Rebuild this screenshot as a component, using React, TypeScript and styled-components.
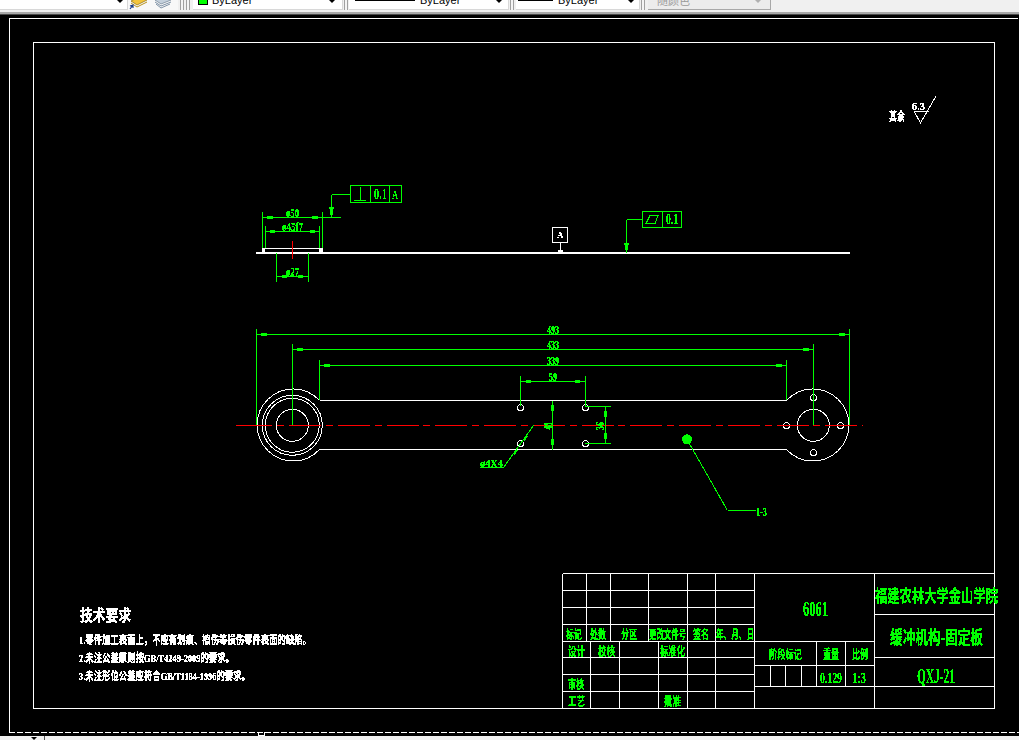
import React from "react";
import styled, { createGlobalStyle } from "styled-components";

const GlobalStyle = createGlobalStyle`
  html, body {
    margin: 0;
    padding: 0;
    background: #000000;
  }
`;

const Page = styled.div`
  display: flex;
  flex-direction: column;
  width: 1019px;
  height: 740px;
  overflow: hidden;
  font-family: "Liberation Sans", "Noto Sans CJK SC", sans-serif;
`;

const Toolbar = styled.div`
  display: flex;
  align-items: flex-end;
  flex: 0 0 15px;
  height: 15px;
  padding-bottom: 4px;
  box-sizing: border-box;
  overflow: hidden;
  background: #f0f0f0;
  border-bottom: 1px solid #4a4a4a;
  box-shadow: inset 0 -2px 0 #a8a8a8;
`;

const Combo = styled.div<{ $w: number; $ml?: number; $disabled?: boolean }>`
  position: relative;
  display: flex;
  align-items: center;
  flex: 0 0 auto;
  width: ${(p) => p.$w}px;
  height: 20px;
  margin-left: ${(p) => p.$ml ?? 0}px;
  box-sizing: border-box;
  background: ${(p) => (p.$disabled ? "#ececec" : "#ffffff")};
  border-bottom: 1px solid ${(p) => (p.$disabled ? "#a8a8a8" : "#d8d8d8")};
  border-right: 1px solid ${(p) => (p.$disabled ? "#a8a8a8" : "#d8d8d8")};
  color: ${(p) => (p.$disabled ? "#9a9a9a" : "#000000")};
  font-size: 11px;
`;

const ComboArrow = styled.span<{ $disabled?: boolean; $r: number }>`
  position: absolute;
  right: ${(p) => p.$r}px;
  top: 9px;
  width: 0;
  height: 0;
  border-left: 4px solid transparent;
  border-right: 4px solid transparent;
  border-top: 4px solid ${(p) => (p.$disabled ? "#b0b0b0" : "#000000")};
`;

const ColorSwatch = styled.span`
  width: 10px;
  height: 10px;
  margin: 0 4px 0 5px;
  background: #00ff00;
  border: 1px solid #000000;
  box-sizing: border-box;
`;

const LineSample = styled.span<{ $w: number; $ml: number }>`
  flex: 0 0 auto;
  width: ${(p) => p.$w}px;
  height: 2px;
  margin: 0 5px 0 ${(p) => p.$ml}px;
  background: #000000;
`;

const DisabledLabel = styled.span`
  margin-left: 9px;
`;

const Grip = styled.span<{ $ml: number }>`
  flex: 0 0 auto;
  width: 2px;
  height: 20px;
  margin-left: ${(p) => p.$ml}px;
  background: #f4f4f4;
  border-left: 1px solid #a0a0a0;
  border-right: 1px solid #a0a0a0;
`;

const IconSlot = styled.div`
  display: flex;
  align-items: flex-end;
  flex: 0 0 50px;
  height: 20px;
  background: #f8f8f8;
`;

const Viewport = styled.div`
  flex: 0 0 721px;
  height: 721px;
  background: #000000;
`;

const Sheet = styled.svg`
  display: block;
  width: 1019px;
  height: 721px;
`;

const StatusStrip = styled.div`
  position: relative;
  flex: 1;
  background: #f0f0f0;
`;

const StatusDivider = styled.span`
  position: absolute;
  left: 44px;
  top: 0;
  width: 1px;
  height: 4px;
  background: #555555;
`;

const StatusArrow = styled.span`
  position: absolute;
  left: 31px;
  top: 1px;
  width: 0;
  height: 0;
  border-left: 3px solid transparent;
  border-right: 3px solid transparent;
  border-top: 3px solid #000000;
`;

const CadText = styled.text<{ $size: number; $color?: string; $heavy?: number }>`
  font-family: "Liberation Serif", "Noto Sans CJK SC", serif;
  font-size: ${(p) => p.$size}px;
  font-weight: 700;
  fill: ${(p) => p.$color ?? "#00ff00"};
  stroke: ${(p) => p.$color ?? "#00ff00"};
  stroke-width: ${(p) => p.$heavy ?? 0.25}px;
`;

const GREEN = "#00ff00";
const WHITE = "#ffffff";
const RED = "#ff0000";

type Seg = [number, number, number, number];
// [x, right, baseline, size, text]
type Label = [number, number, number, number, string];

const TITLE_LINES: Seg[] = [
  [562.5, 573.5, 994.5, 573.5],
  [562.5, 590.5, 754.5, 590.5],
  [562.5, 607.5, 754.5, 607.5],
  [562.5, 624.5, 754.5, 624.5],
  [562.5, 641.5, 874.5, 641.5],
  [562.5, 657.5, 754.5, 657.5],
  [562.5, 674.5, 754.5, 674.5],
  [562.5, 691.5, 754.5, 691.5],
  [754.5, 665.5, 874.5, 665.5],
  [754.5, 686.5, 994.5, 686.5],
  [874.5, 614.5, 994.5, 614.5],
  [874.5, 657.5, 994.5, 657.5],
  [562.5, 573.5, 562.5, 708.5],
  [586.5, 573.5, 586.5, 641.5],
  [610.5, 573.5, 610.5, 641.5],
  [648.5, 573.5, 648.5, 641.5],
  [687.5, 573.5, 687.5, 708.5],
  [715.5, 573.5, 715.5, 708.5],
  [754.5, 573.5, 754.5, 708.5],
  [590.5, 641.5, 590.5, 708.5],
  [619.5, 641.5, 619.5, 708.5],
  [658.5, 641.5, 658.5, 708.5],
  [874.5, 573.5, 874.5, 708.5],
  [816.5, 641.5, 816.5, 686.5],
  [845.5, 641.5, 845.5, 686.5],
  [770.5, 665.5, 770.5, 686.5],
  [785.5, 665.5, 785.5, 686.5],
  [801.5, 665.5, 801.5, 686.5],
];

const DIM_LINES: Seg[] = [
  // upper view, diameters
  [262.5, 212, 262.5, 248],
  [322.5, 212, 322.5, 248],
  [262.5, 217.5, 341, 217.5],
  [265.5, 226, 265.5, 248],
  [319.5, 226, 319.5, 248],
  [265.5, 231.5, 319.5, 231.5],
  [276.5, 253, 276.5, 282],
  [308.5, 253, 308.5, 282],
  [276.5, 276.5, 308.5, 276.5],
  // long dims
  [256.5, 329, 256.5, 425],
  [849.5, 329, 849.5, 425],
  [256.5, 334.5, 849.5, 334.5],
  [292.5, 344, 292.5, 425],
  [813.5, 344, 813.5, 425],
  [292.5, 349.5, 813.5, 349.5],
  [319.5, 360, 319.5, 400],
  [786.5, 360, 786.5, 400],
  [319.5, 365.5, 786.5, 365.5],
  [520.5, 376, 520.5, 406],
  [585.5, 376, 585.5, 406],
  [520.5, 381.5, 585.5, 381.5],
  // middle holes
  [552.5, 400.5, 552.5, 449.5],
  [585, 406.5, 611, 406.5],
  [585, 443.5, 611, 443.5],
  [605.5, 406.5, 605.5, 443.5],
  // leaders
  [331.5, 194.5, 350, 194.5],
  [331.5, 194.5, 331.5, 218],
  [626.5, 219.5, 642.5, 219.5],
  [626.5, 219.5, 626.5, 253],
  [479.5, 467.5, 503.5, 467.5],
  [503.5, 467.5, 533.5, 425.5],
  [687, 439.5, 727.5, 510.5],
  [727.5, 510.5, 756, 510.5],
  // frame dividers
  [370.5, 185.5, 370.5, 202.5],
  [389.5, 185.5, 389.5, 202.5],
  [662.5, 211.5, 662.5, 227.5],
  [360.5, 187, 360.5, 200],
  [354, 200.5, 366, 200.5],
];

// arrow heads, drawn as the small blobs they become at this zoom: [x, y, w, h]
const ARROWS: [number, number, number, number][] = [
  [267, 216, 6, 3],
  [312, 216, 6, 3],
  [270, 230, 5, 3],
  [310, 230, 5, 3],
  [282, 275, 5, 3],
  [298, 275, 5, 3],
  [261, 333, 6, 3],
  [839, 333, 6, 3],
  [297, 348, 6, 3],
  [803, 348, 6, 3],
  [324, 364, 6, 3],
  [776, 364, 6, 3],
  [526, 380, 5, 3],
  [575, 380, 5, 3],
  [551, 405, 3, 6],
  [551, 439, 3, 6],
  [604, 411, 3, 6],
  [604, 433, 3, 6],
];

const BODY_TEXT: Label[] = [
  [80, 131, 621, 16, "技术要求"],
  [79, 311, 644, 11, "1.零件加工表面上，不应有划痕、擦伤等损伤零件表面的缺陷。"],
  [79, 234, 662, 11, "2.未注公差原则按GB/T4249-2009的要求。"],
  [79, 250, 680, 11, "3.未注形位公差应符合GB/T1184-1996的要求。"],
  [889, 905, 120.5, 12, "其余"],
  [912, 925, 109.5, 11, "6.3"],
];

const TITLE_TEXT: Label[] = [
  [875, 998, 602, 17, "福建农林大学金山学院"],
  [890, 983, 644, 18, "缓冲机构-固定板"],
  [769, 802, 658.5, 12, "阶段标记"],
  [823, 839, 658.5, 12, "重量"],
  [852, 868, 658.5, 12, "比例"],
  [566, 582, 638.5, 12, "标记"],
  [590, 606, 638.5, 12, "处数"],
  [621, 637, 638.5, 12, "分区"],
  [649, 686, 638.5, 12, "更改文件号"],
  [693, 709, 638.5, 12, "签名"],
  [716, 754, 638.5, 12, "年、月、日"],
  [568, 585, 655.5, 12, "设计"],
  [598, 615, 655.5, 12, "校核"],
  [660, 685, 655.5, 12, "标准化"],
  [568, 584, 688.5, 12, "审核"],
  [568, 585, 705.5, 12, "工艺"],
  [664, 681, 705.5, 12, "批准"],
  [803, 828, 616, 20, "6061"],
  [917, 955, 683, 21, "QXJ-21"],
  [820, 842, 683, 15, "0.129"],
  [852, 866, 683, 15, "1:3"],
  [286, 299, 217, 13, "ø50"],
  [282, 303, 231, 13, "ø45f7"],
  [286, 299, 276, 13, "ø27"],
  [547, 559, 334, 13, "493"],
  [547, 559, 349, 13, "433"],
  [547, 559, 365, 13, "339"],
  [549, 557, 381, 13, "59"],
  [374, 387, 199, 14, "0.1"],
  [392, 398, 199, 12, "A"],
  [666, 678, 224, 14, "0.1"],
  [480, 503, 466.5, 11, "ø4X4"],
  [756, 767, 516, 13, "1-3"],
];

const HOLES: [number, number][] = [
  [520.5, 407.5],
  [585.5, 407.5],
  [520.5, 443.5],
  [585.5, 443.5],
  [786.5, 425.5],
  [840.5, 425.5],
  [813.5, 397.5],
  [813.5, 452.5],
];

const Lines: React.FC<{ data: Seg[]; color: string }> = ({ data, color }) => (
  <g stroke={color} strokeWidth={1} shapeRendering="crispEdges">
    {data.map(([x1, y1, x2, y2], i) => (
      <line key={i} x1={x1} y1={y1} x2={x2} y2={y2} />
    ))}
  </g>
);

const Labels: React.FC<{ data: Label[]; color?: string }> = ({ data, color }) => (
  <>
    {data.map(([x, right, y, size, text]) => (
      <CadText
        key={text + x + y}
        x={x}
        y={y}
        $size={size}
        $color={color}
        textLength={right - x}
        lengthAdjust="spacingAndGlyphs"
      >
        {text}
      </CadText>
    ))}
  </>
);

const LayerIcons = () => (
  <svg width="50" height="12" viewBox="0 0 50 12">
    <path d="M3 3 L13 -2 L19 2 L9 7 Z" fill="#f2c53d" stroke="#8a6d10" strokeWidth="0.7" />
    <path d="M3 5 L9 9 L19 4" fill="none" stroke="#b8921c" strokeWidth="1" />
    <path d="M2 11 L5 7 M2 8 L5 7 L5 10" stroke="#1c3f8c" strokeWidth="1.2" fill="none" />
    <path d="M27 2 L37 -2 L43 2 L33 6 Z" fill="#c4d0dc" stroke="#6d7f92" strokeWidth="0.7" />
    <path d="M27 4 L33 8 L43 4 M28 6 L33 10 L42 6" fill="none" stroke="#7f92a6" strokeWidth="1" />
  </svg>
);

export default function App() {
  return (
    <>
      <GlobalStyle />
      <Page>
        <Toolbar>
          <Combo $w={128}>
            <ComboArrow $r={3} />
          </Combo>
          <IconSlot>
            <LayerIcons />
          </IconSlot>
          <Grip $ml={2} />
          <Grip $ml={2} />
          <Combo $w={150} $ml={3}>
            <ColorSwatch />
            ByLayer
            <ComboArrow $r={6} />
          </Combo>
          <Grip $ml={1} />
          <Combo $w={160} $ml={1}>
            <LineSample $w={60} $ml={6} />
            ByLayer
            <ComboArrow $r={5} />
          </Combo>
          <Grip $ml={1} />
          <Combo $w={124} $ml={2}>
            <LineSample $w={35} $ml={2} />
            ByLayer
            <ComboArrow $r={4} />
          </Combo>
          <Grip $ml={1} />
          <Combo $w={123} $ml={3} $disabled>
            <DisabledLabel>随颜色</DisabledLabel>
            <ComboArrow $r={8} $disabled />
          </Combo>
        </Toolbar>
        <Viewport>
          <Sheet viewBox="0 15 1019 721">
            <defs>
              <filter
                id="crisp"
                filterUnits="userSpaceOnUse"
                x="0"
                y="0"
                width="1019"
                height="740"
                colorInterpolationFilters="sRGB"
              >
                <feComponentTransfer>
                  <feFuncA type="discrete" tableValues="0 0 1 1" />
                </feComponentTransfer>
              </filter>
            </defs>

            {/* paper and frame */}
            <g fill="none" stroke={WHITE} strokeWidth={1} shapeRendering="crispEdges">
              <path d="M9.5 732 V18.5 H1018" />
              <line x1="9" y1="732.5" x2="1019" y2="732.5" strokeDasharray="6 2" />
              <rect x="33.5" y="42.5" width="961" height="666" />
              <path d="M258.5 732 v3.5 h6 v-3.5" />
            </g>

            <Lines data={TITLE_LINES} color={WHITE} />

            {/* upper view */}
            <g shapeRendering="crispEdges">
              <rect x="256" y="252" width="594" height="2" fill={WHITE} />
              <rect x="263" y="248" width="59" height="1" fill={WHITE} />
              <rect x="262" y="248" width="3" height="4" fill={WHITE} />
              <rect x="319" y="248" width="4" height="4" fill={WHITE} />
              <rect x="292" y="241" width="1" height="18" fill={RED} />
              <rect x="552.5" y="227.5" width="15" height="15" fill="none" stroke={WHITE} />
              <rect x="560" y="243" width="1" height="8" fill={WHITE} />
              <rect x="558" y="250" width="5" height="2" fill={WHITE} />
            </g>

            {/* lower view */}
            <g fill="none" stroke={WHITE} strokeWidth={1} shapeRendering="crispEdges">
              <line x1="319.5" y1="400.5" x2="786.5" y2="400.5" />
              <line x1="319.5" y1="449.5" x2="786.5" y2="449.5" />
              <path d="M319.5 400.5 A36 36 0 1 0 319.5 449.5" />
              <circle cx="292.3" cy="425.3" r="30" />
              <circle cx="292.3" cy="425.3" r="27" />
              <circle cx="292.3" cy="425.3" r="16" />
              <path d="M786.5 400.5 A36 36 0 1 1 786.5 449.5" />
              <circle cx="813.3" cy="425.3" r="16" />
              {HOLES.map(([cx, cy]) => (
                <circle key={`${cx}-${cy}`} cx={cx} cy={cy} r="3" />
              ))}
            </g>

            <g stroke={RED} strokeWidth={1} shapeRendering="crispEdges">
              <line x1="236" y1="425.5" x2="272" y2="425.5" />
              <line x1="277" y1="425.5" x2="863" y2="425.5" strokeDasharray="7 5 32 4.75" />
            </g>

            <Lines data={DIM_LINES} color={GREEN} />

            {/* feature control frames */}
            <g fill="none" stroke={GREEN} strokeWidth={1} shapeRendering="crispEdges">
              <rect x="350.5" y="185.5" width="51" height="17" />
              <rect x="642.5" y="211.5" width="39" height="16" />
              <path d="M650 215.5 H658 L655 223.5 H646 Z" />
            </g>

            <g fill={GREEN} shapeRendering="crispEdges">
              {ARROWS.map(([x, y, w, h]) => (
                <rect key={`${x}-${y}`} x={x} y={y} width={w} height={h} />
              ))}
              <path d="M329 207 H334 V209 H333 V215 H330 V209 H329 Z" />
              <path d="M624 243 H629 V245 H628 V250 H625 V245 H624 Z" />
              <path d="M513 454 L516 449 L518 450 L515 455 Z" />
              <path d="M523 440 L526 435 L528 436 L525 441 Z" />
              <circle cx="687" cy="439.3" r="5" />
            </g>

            {/* surface finish */}
            <path
              d="M914 111 H929 M914 111 L920.5 123 L936 96"
              fill="none"
              stroke={WHITE}
              strokeWidth={1}
              shapeRendering="crispEdges"
            />

            <g filter="url(#crisp)">
              <Labels data={BODY_TEXT} color={WHITE} />
              <Labels data={TITLE_TEXT} />
              <CadText x={557} y={238} $size={9} $color={WHITE} $heavy={0}>
                A
              </CadText>
              <CadText
                transform="translate(552 429.5) rotate(-90)"
                $size={13}
                textLength={7}
                lengthAdjust="spacingAndGlyphs"
              >
                48
              </CadText>
              <CadText
                transform="translate(604 430) rotate(-90)"
                $size={13}
                textLength={8}
                lengthAdjust="spacingAndGlyphs"
              >
                36
              </CadText>
            </g>
          </Sheet>
        </Viewport>
        <StatusStrip>
          <StatusArrow />
          <StatusDivider />
        </StatusStrip>
      </Page>
    </>
  );
}
